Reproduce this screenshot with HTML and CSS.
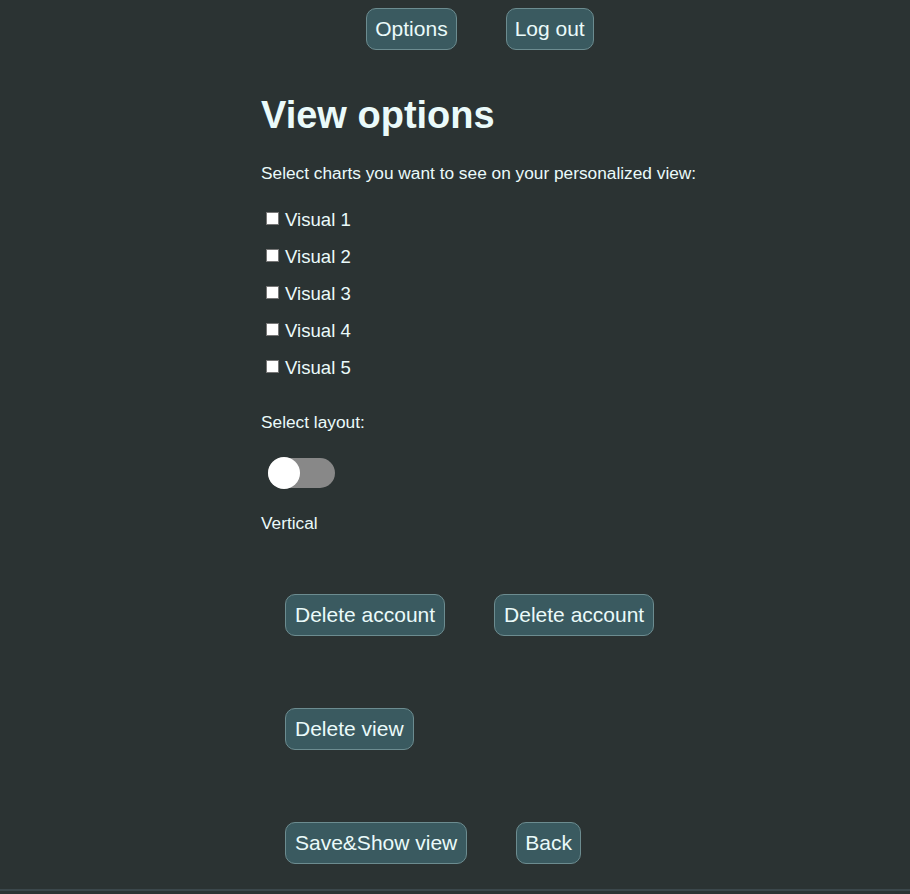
FILE: index.html
```html
<!DOCTYPE html>
<html lang="en">
<head>
<meta charset="utf-8">
<title>View options</title>
<link rel="stylesheet" href="styles.css">
</head>
<body>
<nav class="topnav">
  <button class="btn btn-nav">Options</button>
  <button class="btn btn-nav">Log out</button>
</nav>
<main class="content">
  <h1 class="title">View options</h1>
  <p class="text intro">Select charts you want to see on your personalized view:</p>
  <div class="checks">
    <label class="check"><input type="checkbox" class="box"><span>Visual 1</span></label>
    <label class="check"><input type="checkbox" class="box"><span>Visual 2</span></label>
    <label class="check"><input type="checkbox" class="box"><span>Visual 3</span></label>
    <label class="check"><input type="checkbox" class="box"><span>Visual 4</span></label>
    <label class="check"><input type="checkbox" class="box"><span>Visual 5</span></label>
  </div>
  <p class="text layout-label">Select layout:</p>
  <div class="toggle"><span class="knob"></span></div>
  <p class="text layout-value">Vertical</p>
  <div class="btn-row row-first">
    <button class="btn">Delete account</button>
    <button class="btn">Delete account</button>
  </div>
  <div class="btn-row row-next">
    <button class="btn">Delete view</button>
  </div>
  <div class="btn-row row-next">
    <button class="btn">Save&amp;Show view</button>
    <button class="btn btn-back">Back</button>
  </div>
</main>
<footer class="footer"></footer>
</body>
</html>
```
FILE: styles.css
```css
html {
  background: #2b3333;
}
body {
  margin: 0;
  padding-top: 8px;
  background: #2b3333;
  color: #eafafa;
  font-family: "Liberation Sans", Arial, sans-serif;
}
.topnav {
  display: flex;
  justify-content: center;
  gap: 49px;
  padding-left: 50px;
}
.btn {
  font-family: "Liberation Sans", Arial, sans-serif;
  font-size: 21px;
  line-height: 24px;
  color: #eafafa;
  background: #3a5a60;
  border: 1px solid #6c8c90;
  border-radius: 10px;
  padding: 8px 9px;
  margin: 0;
  cursor: pointer;
}
.btn-nav,
.btn-back {
  padding-left: 8px;
  padding-right: 8px;
}
.content {
  width: 440px;
  margin-left: calc(50% - 194px);
}
.title {
  font-size: 38px;
  line-height: 44px;
  font-weight: bold;
  margin: 43px 0 0;
}
.text {
  font-size: 17.3px;
  line-height: 20px;
  margin: 0;
  white-space: nowrap;
}
.intro {
  margin-top: 26px;
}
.checks {
  margin-top: 18px;
  display: flex;
  flex-direction: column;
}
.check {
  display: flex;
  align-items: center;
  height: 37.2px;
  font-size: 18.6px;
}
.box {
  appearance: none;
  -webkit-appearance: none;
  width: 13px;
  height: 13px;
  margin: 0 6px 3px 5px;
  background: #fff;
  border: 1px solid #767676;
  border-radius: 0;
}
.layout-label {
  margin-top: 25px;
}
.toggle {
  position: relative;
  width: 67px;
  height: 30px;
  margin: 26px 0 0 7px;
  background: #888888;
  border-radius: 15px;
}
.knob {
  position: absolute;
  left: 0;
  top: -1px;
  width: 32px;
  height: 32px;
  border-radius: 50%;
  background: #ffffff;
}
.layout-value {
  margin-top: 25px;
}
.btn-row {
  display: flex;
  gap: 49px;
  padding-left: 24px;
}
.row-first {
  margin-top: 61px;
}
.row-next {
  margin-top: 72px;
}
.footer {
  margin-top: 25px;
  border-top: 2px solid #3b474b;
}
```
